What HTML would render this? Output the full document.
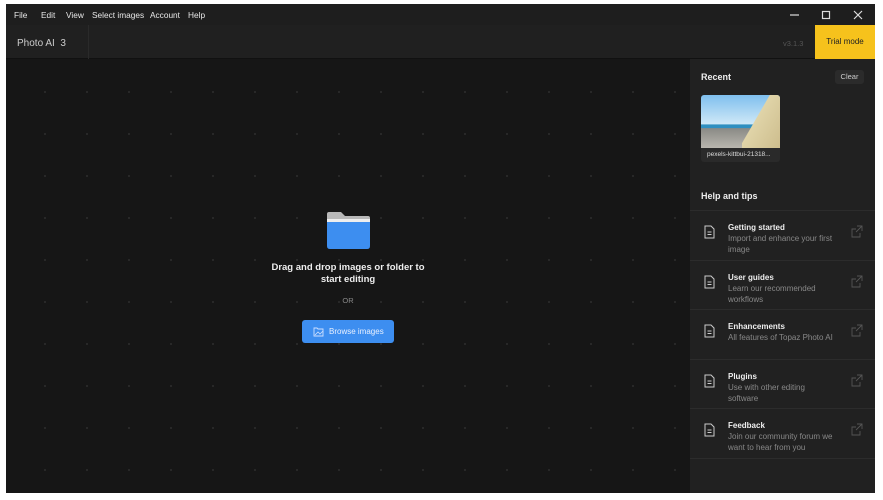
<!DOCTYPE html>
<html><head><meta charset="utf-8"><style>
*{margin:0;padding:0;box-sizing:border-box}
body{width:883px;height:500px;background:#fff;font-family:"Liberation Sans",sans-serif;position:relative;overflow:hidden}
#win{position:absolute;left:6px;top:4px;width:869px;height:489px;background:#171717;overflow:hidden}
#menu{position:absolute;left:0;top:0;width:869px;height:21px;background:#1e1e1e;color:#e8e8e8;font-size:8.3px}
#menu span{position:absolute;top:6px}
#hdr{position:absolute;left:0;top:21px;width:869px;height:34px;background:#202020;border-bottom:1px solid #111}
#main{position:absolute;left:0;top:55px;width:684px;height:434px;background-color:#161616;background-image:radial-gradient(circle,#2c2c2c 0.8px,transparent 1.2px);background-size:42px 42px;background-position:18px 12px}
#side{position:absolute;left:684px;top:55px;width:185px;height:434px;background:#212121}
.t{position:absolute;color:#eee}
.item{position:absolute;left:0;width:185px;height:50px;border-top:1px solid #2c2c2c}
.item .h{position:absolute;left:38px;top:12px;font-size:8px;font-weight:bold;color:#eee}
.item .d{position:absolute;left:38px;top:23px;font-size:8px;color:#888;line-height:10.5px;width:112px}
.item svg{position:absolute}
</style></head><body>
<div id="win">
<div id="menu"><span style="left:8px">File</span><span style="left:35px">Edit</span><span style="left:60px">View</span><span style="left:86px">Select images</span><span style="left:144px">Account</span><span style="left:182px">Help</span>
<svg style="position:absolute;left:780px;top:4px" width="85" height="14"><line x1="4" y1="7" x2="13" y2="7" stroke="#ddd" stroke-width="1.2"/><rect x="36.5" y="3.5" width="7" height="7" fill="none" stroke="#ddd" stroke-width="1.2"/><path d="M68 3L76 11M76 3L68 11" stroke="#ddd" stroke-width="1.2"/></svg></div>
<div id="hdr"><div class="t" style="left:11px;top:13px;font-size:10px;color:#ccc">Photo AI&nbsp; 3</div>
<div style="position:absolute;left:82px;top:0;width:1px;height:34px;background:#2a2a2a"></div>
<div class="t" style="left:777px;top:14px;font-size:7.5px;color:#555">v3.1.3</div>
<div style="position:absolute;left:809px;top:0;width:60px;height:34px;background:#f6c21c;color:#222;font-size:8px;text-align:center;line-height:34px">Trial mode</div></div>
<div id="main">
<svg style="position:absolute;left:320px;top:151px" width="45" height="40"><path d="M1 4Q1 2 3 2H15L19 6H42Q44 6 44 8V12H1Z" fill="#b8b8b8"/><rect x="1" y="9" width="43" height="4" fill="#eee"/><path d="M1 12H44V36Q44 39 41 39H4Q1 39 1 36Z" fill="#3d8ef0"/></svg>
<div class="t" style="left:262px;top:203px;width:160px;text-align:center;font-size:9.5px;font-weight:bold;line-height:12px">Drag and drop images or folder to start editing</div>
<div class="t" style="left:242px;top:237px;width:200px;text-align:center;font-size:7.5px;color:#888">OR</div>
<div style="position:absolute;left:296px;top:261px;width:92px;height:23px;background:#3d8ef0;border-radius:3px;color:#e8f0ff;font-size:8px;line-height:23px;padding-left:27px">Browse images</div>
<svg style="position:absolute;left:307px;top:267px" width="12" height="11"><path d="M1 2H4L5 3H10V10H1Z" fill="none" stroke="#cfe0ff" stroke-width="0.9"/><path d="M2 9L5 6L7 8L10 5" fill="none" stroke="#cfe0ff" stroke-width="0.8"/></svg>
</div>
<div id="side">
<div class="t" style="left:11px;top:13px;font-size:9px;font-weight:bold">Recent</div>
<div style="position:absolute;left:145px;top:11px;width:29px;height:14px;background:#2b2b2b;border-radius:3px;color:#ccc;font-size:7.5px;text-align:center;line-height:14px">Clear</div>
<div style="position:absolute;left:11px;top:36px;width:79px;height:67px;border-radius:3px;overflow:hidden;background:#2a2a2a">
<div style="height:53px;background:linear-gradient(180deg,#7fbfee 0%,#cfe8f7 55%,#2f8fc0 56%,#2f8fc0 62%,#8a8a86 63%,#b9b6ae 100%);position:relative"><div style="position:absolute;right:0;top:0;width:38px;height:53px;background:linear-gradient(120deg,transparent 40%,#e0d4a8 41%,#cdbd8d 100%)"></div></div>
<div style="color:#ddd;font-size:6.5px;padding:3px 0 0 6px">pexels-kittbui-21318...</div></div>
<div class="t" style="left:11px;top:132px;font-size:9px;font-weight:bold">Help and tips</div>
<div class="item" style="top:151px"><div class="h">Getting started</div><div class="d">Import and enhance your first image</div></div>
<div class="item" style="top:201px"><div class="h">User guides</div><div class="d">Learn our recommended workflows</div></div>
<div class="item" style="top:250px"><div class="h">Enhancements</div><div class="d">All features of Topaz Photo AI</div></div>
<div class="item" style="top:300px"><div class="h">Plugins</div><div class="d" style="width:90px">Use with other editing software</div></div>
<div class="item" style="top:349px"><div class="h">Feedback</div><div class="d">Join our community forum we want to hear from you</div></div>
<div class="item" style="top:399px"></div>
<svg style="position:absolute;left:0;top:151px" width="185" height="250">
<g fill="none" stroke="#ccc" stroke-width="1">
<g id="ic"><path d="M15 16H21L24 19V28H15Z"/><path d="M17.5 22H21.5M17.5 24.5H21.5"/></g>
<use href="#ic" y="50"/><use href="#ic" y="99"/><use href="#ic" y="149"/><use href="#ic" y="198"/>
</g>
<g fill="none" stroke="#555" stroke-width="0.9">
<g id="ex"><path d="M166 19H162V27H170V23M167 16H172V21M172 16L166 22"/></g>
<use href="#ex" y="50"/><use href="#ex" y="99"/><use href="#ex" y="149"/><use href="#ex" y="198"/>
</g></svg>
</div>
</div>
</body></html>
